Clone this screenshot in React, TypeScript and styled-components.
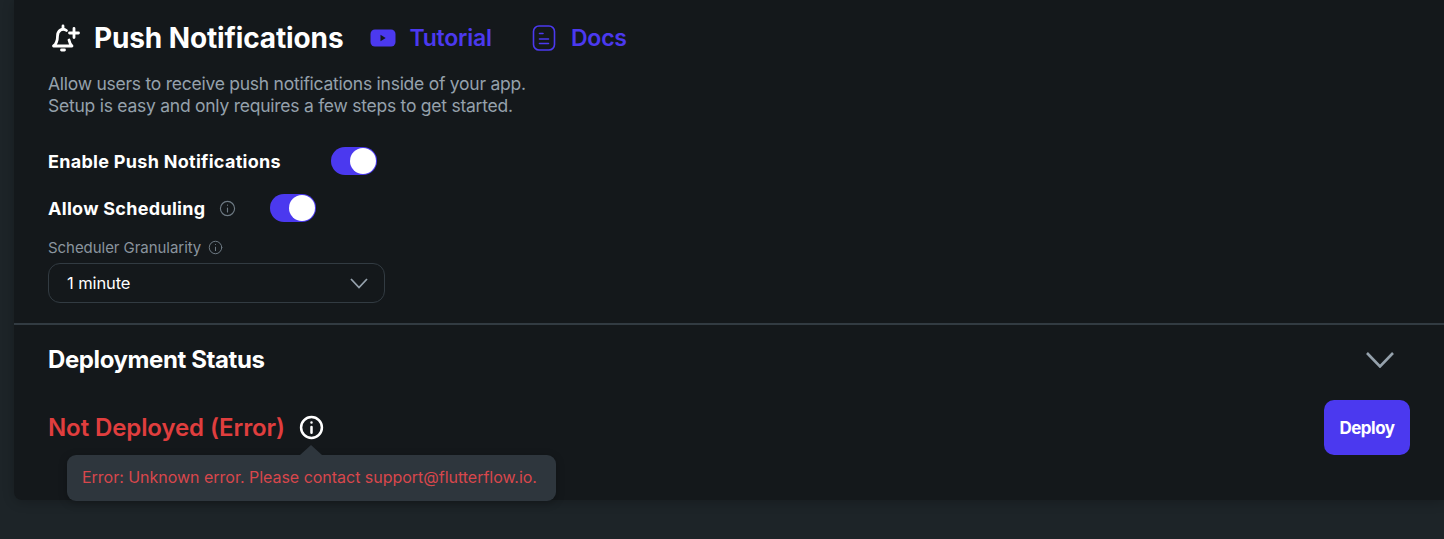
import React from "react";
import styled, { createGlobalStyle } from "styled-components";

const Global = createGlobalStyle`
  html, body { margin: 0; padding: 0; background: #1d2428; }
  body { font-family: Inter, "Noto Sans", sans-serif; }
  * { box-sizing: border-box; }
`;

const Page = styled.div`
  width: 1444px;
  height: 539px;
  padding: 0 0 39px 14px;
  overflow: hidden;
`;

const Panel = styled.main`
  height: 500px;
  background: #14181b;
  border-radius: 0 0 0 8px;
  box-shadow: 0 2px 12px rgba(0, 0, 0, 0.22);
  display: flex;
  flex-direction: column;
`;

const TopSection = styled.section`
  height: 323px;
  padding: 19px 0 0 34px;
  display: flex;
  flex-direction: column;
`;

const TitleRow = styled.div`
  display: flex;
  align-items: center;
  height: 38px;
`;

const Title = styled.h1`
  margin: 0 0 0 14px;
  font-size: 28px;
  line-height: 38px;
  font-weight: 700;
  letter-spacing: -0.13px;
  color: #ffffff;
`;

const HelpLink = styled.a<{ $gap: number; $inner: number }>`
  display: flex;
  align-items: center;
  margin-left: ${(p) => p.$gap}px;
  gap: ${(p) => p.$inner}px;
  font-size: 23px;
  font-weight: 600;
  letter-spacing: -0.2px;
  color: #4b39ef;
`;

const Description = styled.p`
  margin: 16px 0 0;
  font-size: 17.5px;
  line-height: 22px;
  letter-spacing: -0.25px;
  color: #95a1ac;
`;

const ToggleRow = styled.div<{ $gap: number; $top: number }>`
  display: flex;
  align-items: center;
  height: 28px;
  margin-top: ${(p) => p.$top}px;
  gap: ${(p) => p.$gap}px;
`;

const ToggleLabel = styled.span`
  font-size: 18px;
  font-weight: 700;
  letter-spacing: 0.29px;
  color: #ffffff;
`;

const Toggle = styled.span<{ $offset?: number }>`
  width: 46px;
  height: 28px;
  margin-left: ${(p) => p.$offset ?? 0}px;
  border-radius: 14px;
  background: #4b39ef;
  display: flex;
  align-items: center;
  justify-content: flex-end;
  padding-right: 1px;
`;

const Knob = styled.span`
  width: 26px;
  height: 26px;
  border-radius: 50%;
  background: #ffffff;
`;

const FieldLabel = styled.div`
  display: flex;
  align-items: center;
  gap: 7px;
  height: 20px;
  margin-top: 15px;
  font-size: 15px;
  letter-spacing: -0.05px;
  color: #8a949e;
`;

const Select = styled.div`
  width: 337px;
  height: 40px;
  margin-top: 6px;
  padding: 0 16px 0 18px;
  border: 1.5px solid #323b42;
  border-radius: 12px;
  display: flex;
  align-items: center;
  justify-content: space-between;
  font-size: 16.5px;
  letter-spacing: -0.1px;
  color: #ffffff;
`;

const Divider = styled.hr`
  margin: 0;
  border: 0;
  height: 2px;
  background: #323b42;
`;

const BottomSection = styled.section`
  flex: 1;
  padding: 0 34px 0 34px;
  display: flex;
  flex-direction: column;
`;

const StatusHead = styled.div`
  height: 70px;
  display: flex;
  align-items: center;
  justify-content: space-between;
  padding-right: 16px;
`;

const StatusTitle = styled.h2`
  margin: 0 0 2px;
  font-size: 24px;
  font-weight: 700;
  letter-spacing: -0.4px;
  color: #ffffff;
`;

const StatusRow = styled.div`
  display: flex;
  align-items: center;
  justify-content: space-between;
  height: 55px;
  margin-top: 5px;
`;

const StatusLeft = styled.div`
  position: relative;
  display: flex;
  align-items: center;
  gap: 14px;
`;

const ErrorTitle = styled.span`
  font-size: 24px;
  font-weight: 600;
  letter-spacing: -0.1px;
  color: #e03e3e;
`;

const Tooltip = styled.div`
  position: absolute;
  left: 19px;
  top: 42px;
  width: 489px;
  height: 46px;
  padding: 0 0 2px 15px;
  display: flex;
  align-items: center;
  background: #2e363d;
  border-radius: 9px;
  font-size: 16px;
  letter-spacing: -0.02px;
  white-space: nowrap;
  color: #d8474c;
  box-shadow: 0 2px 8px rgba(0, 0, 0, 0.25);
  &::before {
    content: "";
    position: absolute;
    left: 233px;
    top: -10px;
    border-left: 11px solid transparent;
    border-right: 11px solid transparent;
    border-bottom: 10px solid #2e363d;
  }
`;

const DeployButton = styled.button`
  width: 86px;
  height: 55px;
  border: 0;
  border-radius: 10px;
  background: #4b39ef;
  color: #ffffff;
  font-family: inherit;
  font-size: 17px;
  font-weight: 700;
  letter-spacing: -0.5px;
`;

const InfoIcon = ({ size, color, width }: { size: number; color: string; width: number }) => (
  <svg width={size} height={size} viewBox="0 0 24 24" fill="none" stroke={color} strokeWidth={width} strokeLinecap="round">
    <circle cx="12" cy="12" r="10" />
    <path d="M12 11.5v5.5M12 7.2v.1" />
  </svg>
);

const Chevron = ({ w, h, color, sw }: { w: number; h: number; color: string; sw: number }) => (
  <svg width={w} height={h} viewBox={`0 0 ${w} ${h}`} fill="none" stroke={color} strokeWidth={sw}>
    <path d={`M1 1L${w / 2} ${h - 1.5}L${w - 1} 1`} />
  </svg>
);

const BellPlus = () => (
  <svg width="32" height="32" viewBox="0 0 32 32" fill="none" stroke="#fff" strokeWidth="2.8" strokeLinecap="round" strokeLinejoin="round">
    <path d="M18.5 8.5C14.5 5.5 9.5 8.5 9.5 14C9.5 18 9 21.5 5.5 24H24C22.5 22.5 21.5 20.5 21 18" />
    <path d="M15 4v2M13.5 28h3M21.5 11h9M26 6.5v9" />
  </svg>
);

const YouTubeIcon = () => (
  <svg width="26" height="18" viewBox="0 0 26 18">
    <rect x="0.5" y="0.5" width="25" height="17" rx="4.5" fill="#4b39ef" />
    <path d="M10.5 5.8v6.4l5.2-3.2z" fill="#14181b" />
  </svg>
);

const DocIcon = () => (
  <svg width="24" height="28" viewBox="0 0 24 28" fill="none" stroke="#4b39ef" strokeWidth="1.6" strokeLinecap="round">
    <rect x="1.5" y="2" width="21" height="24" rx="5.5" />
    <path d="M7.5 9.5h3.5M7.5 15h9M7.5 19.5h9" />
  </svg>
);

export default function App() {
  return (
    <Page>
      <Global />
      <Panel>
        <TopSection>
          <TitleRow>
            <BellPlus />
            <Title>Push Notifications</Title>
            <HelpLink $gap={27} $inner={13}><YouTubeIcon />Tutorial</HelpLink>
            <HelpLink $gap={40} $inner={15}><DocIcon />Docs</HelpLink>
          </TitleRow>
          <Description>
            Allow users to receive push notifications inside of your app.
            <br />
            Setup is easy and only requires a few steps to get started.
          </Description>
          <ToggleRow $gap={50} $top={30}>
            <ToggleLabel>Enable Push Notifications</ToggleLabel>
            <Toggle><Knob /></Toggle>
          </ToggleRow>
          <ToggleRow $gap={14} $top={19}>
            <ToggleLabel>Allow Scheduling</ToggleLabel>
            <InfoIcon size={17} color="#6e7a84" width={1.6} />
            <Toggle $offset={20}><Knob /></Toggle>
          </ToggleRow>
          <FieldLabel>
            Scheduler Granularity
            <InfoIcon size={15} color="#6e7a84" width={1.6} />
          </FieldLabel>
          <Select>
            1 minute
            <Chevron w={18} h={11} color="#95a1ac" sw={1.8} />
          </Select>
        </TopSection>
        <Divider />
        <BottomSection>
          <StatusHead>
            <StatusTitle>Deployment Status</StatusTitle>
            <Chevron w={28} h={16} color="#95a1ac" sw={2.6} />
          </StatusHead>
          <StatusRow>
            <StatusLeft>
              <ErrorTitle>Not Deployed (Error)</ErrorTitle>
              <InfoIcon size={25} color="#ffffff" width={2.4} />
              <Tooltip>Error: Unknown error. Please contact support@flutterflow.io.</Tooltip>
            </StatusLeft>
            <DeployButton>Deploy</DeployButton>
          </StatusRow>
        </BottomSection>
      </Panel>
    </Page>
  );
}
